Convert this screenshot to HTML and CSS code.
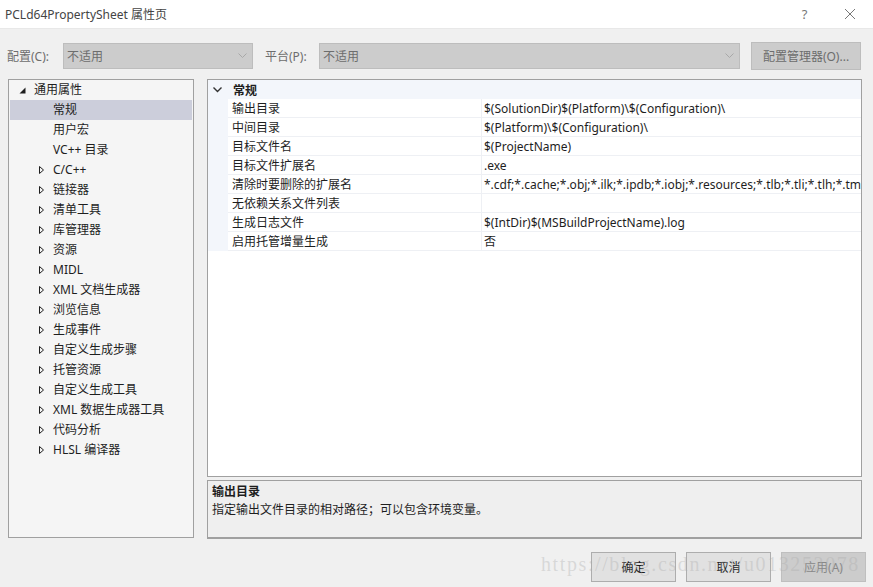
FILE: index.html
```html
<!DOCTYPE html>
<html lang="zh-CN">
  <head>
    <meta charset="UTF-8" />
    <title>PCLd64PropertySheet 属性页</title>
    <link rel="stylesheet" href="styles.css">
  </head>
  <body>
    <div class="dialog">
      <div class="titlebar">
        <span class="title">PCLd64PropertySheet 属性页</span>
        <span class="title_btn">?</span>
        <span class="title_btn close">
          <svg width="12" height="12" viewBox="0 0 12 12"><path d="M1 1L11 11M11 1L1 11" stroke="#777" stroke-width="1" fill="none"/></svg>
        </span>
      </div>

      <div class="toolbar">
        <span class="tool_label label_config">配置(C):</span>
        <div class="combo combo_config">
          <span>不适用</span>
          <svg width="9" height="6" viewBox="0 0 9 6"><path d="M0.5 0.5L4.5 4.5L8.5 0.5" stroke="#a8a8a8" fill="none"/></svg>
        </div>
        <span class="tool_label label_platform">平台(P):</span>
        <div class="combo combo_platform">
          <span>不适用</span>
          <svg width="9" height="6" viewBox="0 0 9 6"><path d="M0.5 0.5L4.5 4.5L8.5 0.5" stroke="#a8a8a8" fill="none"/></svg>
        </div>
        <button class="btn_manager">配置管理器(O)...</button>
      </div>

      <div class="main">
        <div class="tree">
          <div class="tree_row root">
            <svg class="twisty" width="15" height="20" viewBox="0 0 15 20"><path d="M0.5 13.5L6.5 13.5L6.5 7.5Z" fill="#1e1e1e"/></svg>通用属性
          </div>
          <div class="tree_row child selected">常规</div>
          <div class="tree_row child">用户宏</div>
          <div class="tree_row child">VC++ 目录</div>
          <div class="tree_row group"><svg class="twisty" width="15" height="20" viewBox="0 0 15 20"><path d="M1.5 6.5L1.5 13.5L5.5 10Z" stroke="#1e1e1e" fill="none"/></svg>C/C++</div>
          <div class="tree_row group"><svg class="twisty" width="15" height="20" viewBox="0 0 15 20"><path d="M1.5 6.5L1.5 13.5L5.5 10Z" stroke="#1e1e1e" fill="none"/></svg>链接器</div>
          <div class="tree_row group"><svg class="twisty" width="15" height="20" viewBox="0 0 15 20"><path d="M1.5 6.5L1.5 13.5L5.5 10Z" stroke="#1e1e1e" fill="none"/></svg>清单工具</div>
          <div class="tree_row group"><svg class="twisty" width="15" height="20" viewBox="0 0 15 20"><path d="M1.5 6.5L1.5 13.5L5.5 10Z" stroke="#1e1e1e" fill="none"/></svg>库管理器</div>
          <div class="tree_row group"><svg class="twisty" width="15" height="20" viewBox="0 0 15 20"><path d="M1.5 6.5L1.5 13.5L5.5 10Z" stroke="#1e1e1e" fill="none"/></svg>资源</div>
          <div class="tree_row group"><svg class="twisty" width="15" height="20" viewBox="0 0 15 20"><path d="M1.5 6.5L1.5 13.5L5.5 10Z" stroke="#1e1e1e" fill="none"/></svg>MIDL</div>
          <div class="tree_row group"><svg class="twisty" width="15" height="20" viewBox="0 0 15 20"><path d="M1.5 6.5L1.5 13.5L5.5 10Z" stroke="#1e1e1e" fill="none"/></svg>XML 文档生成器</div>
          <div class="tree_row group"><svg class="twisty" width="15" height="20" viewBox="0 0 15 20"><path d="M1.5 6.5L1.5 13.5L5.5 10Z" stroke="#1e1e1e" fill="none"/></svg>浏览信息</div>
          <div class="tree_row group"><svg class="twisty" width="15" height="20" viewBox="0 0 15 20"><path d="M1.5 6.5L1.5 13.5L5.5 10Z" stroke="#1e1e1e" fill="none"/></svg>生成事件</div>
          <div class="tree_row group"><svg class="twisty" width="15" height="20" viewBox="0 0 15 20"><path d="M1.5 6.5L1.5 13.5L5.5 10Z" stroke="#1e1e1e" fill="none"/></svg>自定义生成步骤</div>
          <div class="tree_row group"><svg class="twisty" width="15" height="20" viewBox="0 0 15 20"><path d="M1.5 6.5L1.5 13.5L5.5 10Z" stroke="#1e1e1e" fill="none"/></svg>托管资源</div>
          <div class="tree_row group"><svg class="twisty" width="15" height="20" viewBox="0 0 15 20"><path d="M1.5 6.5L1.5 13.5L5.5 10Z" stroke="#1e1e1e" fill="none"/></svg>自定义生成工具</div>
          <div class="tree_row group"><svg class="twisty" width="15" height="20" viewBox="0 0 15 20"><path d="M1.5 6.5L1.5 13.5L5.5 10Z" stroke="#1e1e1e" fill="none"/></svg>XML 数据生成器工具</div>
          <div class="tree_row group"><svg class="twisty" width="15" height="20" viewBox="0 0 15 20"><path d="M1.5 6.5L1.5 13.5L5.5 10Z" stroke="#1e1e1e" fill="none"/></svg>代码分析</div>
          <div class="tree_row group"><svg class="twisty" width="15" height="20" viewBox="0 0 15 20"><path d="M1.5 6.5L1.5 13.5L5.5 10Z" stroke="#1e1e1e" fill="none"/></svg>HLSL 编译器</div>
        </div>

        <div class="right">
          <div class="grid">
            <div class="category">
              <svg class="cat_icon" width="9" height="6" viewBox="0 0 9 6"><path d="M0.5 0.5L4.5 4.5L8.5 0.5" stroke="#333" stroke-width="1.4" fill="none"/></svg>
              <span>常规</span>
            </div>
            <div class="prop"><div class="pname">输出目录</div><div class="pvalue">$(SolutionDir)$(Platform)\$(Configuration)\</div></div>
            <div class="prop"><div class="pname">中间目录</div><div class="pvalue">$(Platform)\$(Configuration)\</div></div>
            <div class="prop"><div class="pname">目标文件名</div><div class="pvalue">$(ProjectName)</div></div>
            <div class="prop"><div class="pname">目标文件扩展名</div><div class="pvalue">.exe</div></div>
            <div class="prop"><div class="pname">清除时要删除的扩展名</div><div class="pvalue">*.cdf;*.cache;*.obj;*.ilk;*.ipdb;*.iobj;*.resources;*.tlb;*.tli;*.tlh;*.tmp;*</div></div>
            <div class="prop"><div class="pname">无依赖关系文件列表</div><div class="pvalue"></div></div>
            <div class="prop"><div class="pname">生成日志文件</div><div class="pvalue">$(IntDir)$(MSBuildProjectName).log</div></div>
            <div class="prop"><div class="pname">启用托管增量生成</div><div class="pvalue">否</div></div>
          </div>
          <div class="desc">
            <div class="desc_title">输出目录</div>
            <div class="desc_text">指定输出文件目录的相对路径；可以包含环境变量。</div>
          </div>
        </div>
      </div>

      <div class="footer">
        <button class="btn">确定</button>
        <button class="btn">取消</button>
        <button class="btn disabled">应用(A)</button>
      </div>

      <div class="watermark">https://blog.csdn.net/u013252078</div>
    </div>
  </body>
</html>
```

FILE: styles.css
```css
html,
body {
  margin: 0;
  padding: 0;
}

body {
  background-color: #f0f0f0;
  font-family: "Noto Sans", "Noto Sans CJK SC", sans-serif;
  font-size: 12px;
  color: #1e1e1e;
}

.dialog {
  position: relative;
  width: 873px;
  height: 587px;
  overflow: hidden;
}

.titlebar {
  height: 29px;
  background-color: #ffffff;
  border-bottom: 1px solid #e8e8e8;
  display: flex;
  align-items: center;
  padding-left: 5px;
  box-sizing: border-box;
}

.title {
  flex: 1;
  color: #444;
  font-size: 12px;
}

.title_btn {
  width: 45px;
  text-align: center;
  color: #777;
  font-size: 13px;
}

.close {
  display: flex;
  justify-content: center;
  margin-right: 1px;
}

.toolbar {
  display: flex;
  align-items: center;
  height: 28px;
  margin-top: 13px;
  padding-left: 7px;
}

.tool_label {
  color: #6d6d6d;
  white-space: nowrap;
}

.label_config {
  width: 56px;
}

.label_platform {
  width: 54px;
  margin-left: 12px;
}

.combo {
  height: 26px;
  background-color: #cccccc;
  border: 1px solid #bdbdbd;
  box-sizing: border-box;
  display: flex;
  align-items: center;
  justify-content: space-between;
  padding: 0 5px 0 3px;
  color: #6d6d6d;
}

.combo_config {
  width: 190px;
}

.combo_platform {
  width: 421px;
}

.btn_manager {
  margin-left: 11px;
  width: 110px;
  height: 28px;
  background-color: #cccccc;
  border: 1px solid #bdbdbd;
  color: #6d6d6d;
  font-family: inherit;
  font-size: 12px;
  padding: 0;
}

.main {
  display: flex;
  margin-top: 9px;
  padding-left: 8px;
}

.tree {
  width: 186px;
  height: 459px;
  background-color: #f5f5f5;
  border: 1px solid #a0a0a0;
  box-sizing: border-box;
  padding: 0 1px;
}

.tree_row {
  height: 20px;
  line-height: 20px;
  display: flex;
  align-items: center;
  white-space: nowrap;
}

.tree_row.root {
  padding-left: 9px;
}

.tree_row.group {
  padding-left: 28px;
}

.tree_row.child {
  padding-left: 43px;
}

.tree_row.selected {
  background-color: #cccedb;
}

.twisty {
  flex: none;
}

.right {
  margin-left: 13px;
  width: 655px;
  display: flex;
  flex-direction: column;
}

.grid {
  height: 398px;
  background-color: #ffffff;
  border: 1px solid #a0a0a0;
  box-sizing: border-box;
  overflow: hidden;
}

.category {
  height: 19px;
  background-color: #f3f6fb;
  display: flex;
  align-items: center;
  font-weight: bold;
}

.cat_icon {
  margin-left: 5px;
  margin-right: 11px;
}

.prop {
  display: flex;
  height: 19px;
  background-color: #f3f6fb;
}

.pname {
  width: 249px;
  margin-left: 20px;
  padding-left: 4px;
  background-color: #ffffff;
  border-bottom: 1px solid #eef0f4;
  border-right: 1px solid #eef0f4;
  line-height: 20px;
  white-space: nowrap;
  overflow: hidden;
}

.pvalue {
  flex: 1;
  background-color: #ffffff;
  border-bottom: 1px solid #eef0f4;
  padding-left: 2px;
  line-height: 20px;
  white-space: nowrap;
  overflow: hidden;
}

.desc {
  margin-top: 3px;
  height: 59px;
  background-color: #efefef;
  border: 1px solid #a0a0a0;
  border-bottom: 2px solid #a0a0a0;
  box-sizing: border-box;
  padding: 2px 4px;
}

.desc_title {
  font-weight: bold;
  line-height: 18px;
}

.desc_text {
  line-height: 17px;
}

.footer {
  display: flex;
  justify-content: flex-end;
  gap: 10px;
  margin-top: 13px;
  padding-right: 7px;
}

.btn {
  width: 85px;
  height: 30px;
  background-color: #e1e1e1;
  border: 1px solid #adadad;
  font-family: inherit;
  font-size: 12px;
  color: #1e1e1e;
  padding: 0;
}

.btn.disabled {
  background-color: #cccccc;
  border-color: #bfbfbf;
  color: #888;
}

.watermark {
  position: absolute;
  left: 541px;
  top: 553px;
  font-family: "Liberation Serif", serif;
  font-size: 20px;
  letter-spacing: 1.6px;
  color: rgba(170, 170, 170, 0.35);
  pointer-events: none;
  white-space: nowrap;
}
```
